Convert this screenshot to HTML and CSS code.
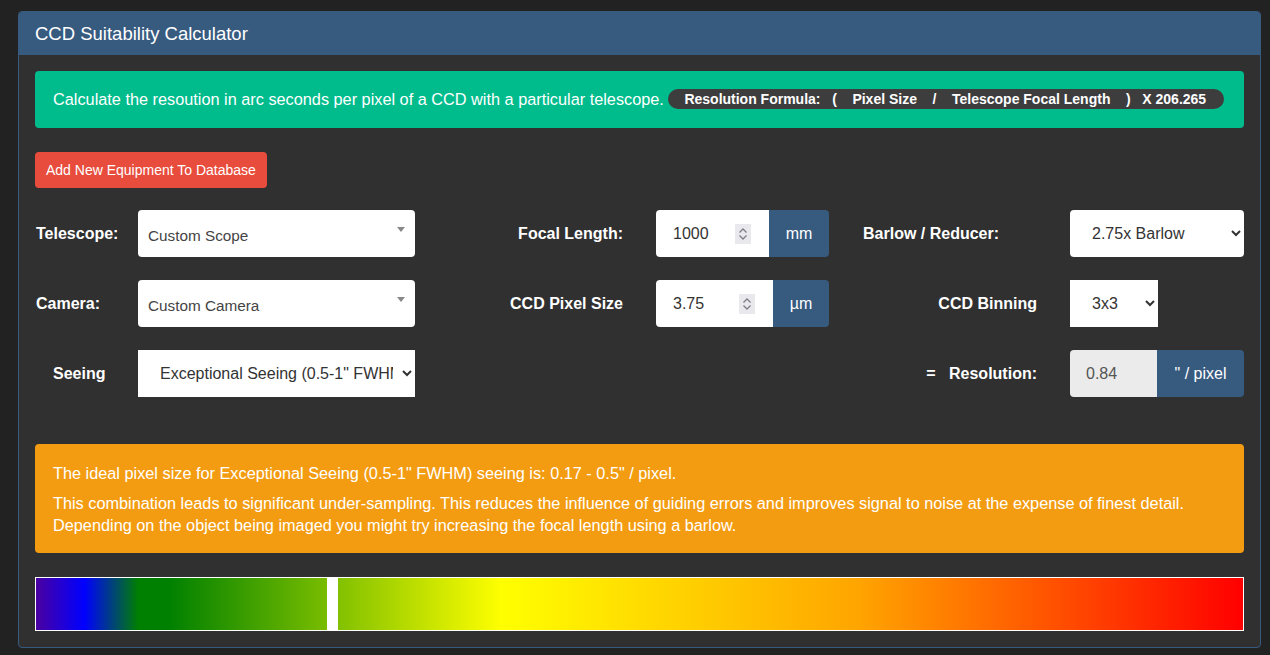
FILE: index.html
```html
<!DOCTYPE html>
<html lang="en">
<head>
<meta charset="utf-8">
<title>CCD Suitability Calculator</title>
<link rel="stylesheet" href="styles.css">
</head>
<body>
    <div class="panel">
        <div class="panel-heading">CCD Suitability Calculator</div>
        <div class="panel-body">

            <div class="alert alert-info">
                Calculate the resoution in arc seconds per pixel of a CCD with a particular telescope.
                <span class="badge">Resolution Formula:&nbsp;&nbsp;&nbsp;(&nbsp;&nbsp;&nbsp;&nbsp;Pixel Size&nbsp;&nbsp;&nbsp;&nbsp;/&nbsp;&nbsp;&nbsp;&nbsp;Telescope Focal Length&nbsp;&nbsp;&nbsp;&nbsp;)&nbsp;&nbsp;&nbsp;X 206.265</span>
            </div>

            <button class="btn-danger">Add New Equipment To Database</button>

            <form class="calc">
                <!-- row 1 -->
                <label class="lbl lbl-left">Telescope:</label>
                <div class="combo"><span>Custom Scope</span><b class="caret"></b></div>
                <label class="lbl lbl-right">Focal Length:</label>
                <div class="input-group">
                    <div class="num"><span>1000</span><i class="spin"><svg width="16" height="20" viewBox="0 0 16 20"><path d="M4.5 8.5 8 5 11.5 8.5M4.5 11.5 8 15 11.5 11.5" fill="none" stroke="#7d7d85" stroke-width="1.3"/></svg></i></div>
                    <span class="addon addon-mm">mm</span>
                </div>
                <label class="lbl lbl-barlow">Barlow / Reducer:</label>
                <select class="sel sel-round">
                    <option>2.75x Barlow</option>
                </select>

                <!-- row 2 -->
                <label class="lbl lbl-left">Camera:</label>
                <div class="combo"><span>Custom Camera</span><b class="caret"></b></div>
                <label class="lbl lbl-right">CCD Pixel Size</label>
                <div class="input-group">
                    <div class="num"><span>3.75</span><i class="spin"><svg width="16" height="20" viewBox="0 0 16 20"><path d="M4.5 8.5 8 5 11.5 8.5M4.5 11.5 8 15 11.5 11.5" fill="none" stroke="#7d7d85" stroke-width="1.3"/></svg></i></div>
                    <span class="addon addon-um">&micro;m</span>
                </div>
                <label class="lbl lbl-right">CCD Binning</label>
                <div><select class="sel sel-bin"><option>3x3</option></select></div>

                <!-- row 3 -->
                <label class="lbl lbl-seeing">Seeing</label>
                <select class="sel sel-seeing">
                    <option>Exceptional Seeing (0.5-1" FWHM)</option>
                </select>
                <span></span>
                <span></span>
                <label class="lbl lbl-right">=&nbsp;&nbsp;&nbsp;Resolution:</label>
                <div class="input-group">
                    <div class="num readonly"><span>0.84</span></div>
                    <span class="addon addon-px">" / pixel</span>
                </div>
            </form>

            <div class="alert alert-warning">
                <p>The ideal pixel size for Exceptional Seeing (0.5-1" FWHM) seeing is: 0.17 - 0.5" / pixel.</p>
                <p>This combination leads to significant under-sampling. This reduces the influence of guiding errors and improves signal to noise at the expense of finest detail.
                Depending on the object being imaged you might try increasing the focal length using a barlow.</p>
            </div>

            <div class="scale">
                <div class="marker" style="left: 24.1%"></div>
            </div>
        </div>
    </div>
</body>
</html>
```

FILE: styles.css
```css
body{
    margin: 0;
    background: #222;
    font-family: "Liberation Sans", Arial, sans-serif;
    color: #fff;
}
.panel{
    margin: 11px 10px 0 18px;
    width: 1241px;
    border: 1px solid #375a7f;
    border-radius: 4px;
    background: #303030;
    overflow: hidden;
}
.panel-heading{
    background: #375a7f;
    height: 43px;
    line-height: 43px;
    padding: 0 16px;
    font-size: 18.5px;
}
.panel-body{
    padding: 16px 16px 16px 16px;
}

/* alerts */
.alert{
    border-radius: 4px;
    font-size: 16.3px;
}
.alert-info{
    background: #00bc8c;
    padding: 18px 18px;
    line-height: 21px;
    height: 21px;
    white-space: nowrap;
}
.badge{
    display: inline-block;
    vertical-align: 1px;
    background: #3d3d3d;
    border-radius: 10px;
    height: 20px;
    line-height: 20px;
    padding: 0 18px 0 16px;
    font-size: 14px;
    font-weight: bold;
}
.alert-warning{
    background: #f39c12;
    margin-top: 47px;
    padding: 18px 18px 17px;
    line-height: 22px;
}
.alert-warning p{
    margin: 0;
}
.alert-warning p + p{
    margin-top: 8px;
}

.btn-danger{
    display: block;
    margin-top: 24px;
    height: 36px;
    padding: 0 11px;
    border: 0;
    border-radius: 4px;
    background: #e74c3c;
    color: #fff;
    font-family: inherit;
    font-size: 14px;
}

/* the calculator grid */
.calc{
    margin: 22px 0 0;
    display: grid;
    grid-template-columns: 103px 277px 241px 173px 241px 174px;
    grid-auto-rows: 47px;
    row-gap: 23px;
    align-items: center;
}
.lbl{
    font-weight: bold;
    font-size: 16px;
}
.lbl-left{ padding-left: 1px; }
.lbl-seeing{ padding-left: 18px; }
.lbl-right{
    text-align: right;
    padding-right: 33px;
}
.lbl-barlow{ padding-left: 34px; }

.combo{
    height: 47px;
    background: #fff;
    border-radius: 4px;
    position: relative;
    color: #444;
    font-size: 15.3px;
    line-height: 51px;
    padding-left: 10px;
}
.caret{
    position: absolute;
    right: 10px;
    top: 17px;
    border-left: 4px solid transparent;
    border-right: 4px solid transparent;
    border-top: 5px solid #888;
}

.sel{
    height: 47px;
    border: 0;
    background: #fff;
    color: #333;
    font-family: inherit;
    font-size: 16px;
    padding: 0 6px 0 18px;
    border-radius: 0;
    width: 100%;
}
.sel-round{ border-radius: 4px; }
.sel-bin{ width: 88px; }
.sel-seeing{ padding-left: 18px; }

.input-group{
    display: flex;
    height: 47px;
}
.num{
    flex: 1;
    background: #fff;
    border-radius: 4px 0 0 4px;
    display: flex;
    align-items: center;
    justify-content: space-between;
    padding: 0 18px 0 17px;
    color: #333;
    font-size: 16px;
}
.num.readonly{
    background: #ebebeb;
    color: #555;
    padding-left: 16px;
}
.spin{
    display: block;
    width: 16px;
    height: 20px;
    background: #e9e9ed;
}
.spin svg{ display: block; }
.addon{
    background: #375a7f;
    border-radius: 0 4px 4px 0;
    font-size: 16px;
    line-height: 47px;
    text-align: center;
}
.addon-mm{ width: 60px; }
.addon-um{ width: 56px; }
.addon-px{ width: 87px; }

/* colour scale under the result */
.scale{
    position: relative;
    margin-top: 24px;
    height: 52px;
    border: 1px solid #fff;
    background: linear-gradient(to right, #4b00a0 0%, #0000ff 4%, #008000 8.5%, #008000 11%, #ffff00 38.6%, #ffa500 68%, #ff0000 100%);
}
.marker{
    position: absolute;
    top: 0;
    bottom: 0;
    width: 11px;
    background: #fff;
}
```
